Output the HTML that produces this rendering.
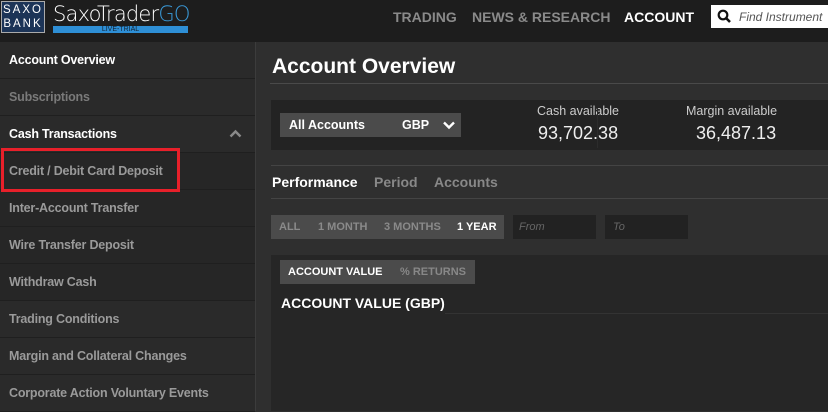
<!DOCTYPE html>
<html><head><style>
*{margin:0;padding:0;box-sizing:border-box}
body{width:828px;height:411px;overflow:hidden;background:#2f2f2f;font-family:"Liberation Sans",Arial,sans-serif;position:relative;color:#fff}
.a{position:absolute}
.hdr{left:0;top:0;width:828px;height:42px;background:#1d1d1d}
.nav{font-weight:bold;font-size:14px;top:9px;color:#8a8a8a}
.side{left:0;top:42px;width:256px;height:369px;background:#2a2a2a;border-right:1px solid #3c3c3c}
.row{position:absolute;left:0;width:255px;height:37px;border-bottom:1px solid #1f1f1f;font-size:12.5px;font-weight:bold;line-height:36px;padding-left:9px;color:#9a9a9a;letter-spacing:-0.2px}
.sub{background:#262626}
.b{color:#fff}
</style></head><body>
<div class="a hdr"></div>
<div class="a" style="left:1px;top:1px;width:44px;height:32px;border:1px solid #aaa;background:#1c3457;color:#fff;font-size:11.5px;letter-spacing:2px;line-height:14px;text-align:center;padding-top:1px">SAXO<br>BANK</div>
<div class="a" style="left:53px;top:2px;font-size:21px;color:#fff;font-family:'DejaVu Sans',sans-serif;font-weight:200;letter-spacing:-0.8px">SaxoTrader<span style="color:#3a9ad9">GO</span></div>
<div class="a" style="left:53px;top:26px;width:135px;height:7px;background:#2e8fd6;color:#123;font-size:7px;line-height:7px;text-align:center">LIVE-TRIAL</div>
<div class="a nav" style="left:393px">TRADING</div>
<div class="a nav" style="left:472px">NEWS &amp; RESEARCH</div>
<div class="a nav" style="left:624px;color:#fff">ACCOUNT</div>
<div class="a" style="left:711px;top:5px;width:117px;height:23px;background:#fff"></div>
<svg class="a" style="left:717px;top:9px" width="14" height="14" viewBox="0 0 14 14"><circle cx="6" cy="6" r="4.3" stroke="#111" stroke-width="2.2" fill="none"/><path d="M9 9l4 4" stroke="#111" stroke-width="2.6"/></svg>
<div class="a" style="left:739px;top:10px;font-size:12px;font-style:italic;color:#555">Find Instrument</div>

<div class="a side">
<div class="row b" style="top:0">Account Overview</div>
<div class="row" style="top:37px;color:#7a7a7a">Subscriptions</div>
<div class="row b" style="top:74px">Cash Transactions<svg style="position:absolute;left:229px;top:13px" width="13" height="9" viewBox="0 0 13 9"><path d="M1.5 7.5l5-5 5 5" stroke="#8a8a8a" stroke-width="2.4" fill="none"/></svg></div>
<div class="row sub" style="top:111px">Credit / Debit Card Deposit</div>
<div class="row sub" style="top:148px">Inter-Account Transfer</div>
<div class="row sub" style="top:185px">Wire Transfer Deposit</div>
<div class="row sub" style="top:222px">Withdraw Cash</div>
<div class="row" style="top:259px">Trading Conditions</div>
<div class="row" style="top:296px">Margin and Collateral Changes</div>
<div class="row" style="top:333px">Corporate Action Voluntary Events</div>
</div>
<div class="a" style="left:1px;top:148px;width:179px;height:44px;border:3px solid #e8202a"></div>

<div class="a" style="left:272px;top:55px;font-size:21px;font-weight:bold">Account Overview</div>
<div class="a" style="left:270px;top:83px;width:558px;height:1px;background:#4a4a4a"></div>
<div class="a" style="left:271px;top:100px;width:557px;height:50px;background:#232323"></div>
<div class="a" style="left:280px;top:113px;width:181px;height:24px;background:#4b4b4b;font-size:12.5px;font-weight:bold;line-height:24px;padding-left:9px">All Accounts<span style="position:absolute;left:122px">GBP</span>
<svg style="position:absolute;left:163px;top:8px" width="12" height="9" viewBox="0 0 12 9"><path d="M1 1.5l5 5 5-5" stroke="#fff" stroke-width="2.4" fill="none"/></svg></div>
<div class="a" style="left:537px;top:104px;font-size:12.5px;color:#ccc">Cash available</div>
<div class="a" style="left:538px;top:123px;font-size:18px;color:#eee">93,702.38</div>
<div class="a" style="left:597px;top:108px;width:1px;height:40px;background:#2c2c2c"></div>
<div class="a" style="left:686px;top:104px;font-size:12.5px;color:#ccc">Margin available</div>
<div class="a" style="left:696px;top:123px;font-size:18px;color:#eee">36,487.13</div>
<div class="a" style="left:271px;top:165px;width:557px;height:1px;background:#444"></div>
<div class="a" style="left:272px;top:174px;font-size:14px;font-weight:bold">Performance</div>
<div class="a" style="left:374px;top:174px;font-size:14px;font-weight:bold;color:#888">Period</div>
<div class="a" style="left:434px;top:174px;font-size:14px;font-weight:bold;color:#888">Accounts</div>
<div class="a" style="left:271px;top:198px;width:557px;height:1px;background:#444"></div>
<div class="a" style="left:271px;top:215px;width:233px;height:24px;background:#4b4b4b;font-size:11px;font-weight:bold;line-height:24px;color:#8a8a8a">
<span style="position:absolute;left:8px">ALL</span><span style="position:absolute;left:47px">1 MONTH</span><span style="position:absolute;left:113px">3 MONTHS</span><span style="position:absolute;left:186px;color:#fff">1 YEAR</span></div>
<div class="a" style="left:513px;top:215px;width:83px;height:24px;background:#222;font-size:11px;font-style:italic;color:#666;line-height:24px;padding-left:6px">From</div>
<div class="a" style="left:605px;top:215px;width:83px;height:24px;background:#222;font-size:11px;font-style:italic;color:#666;line-height:24px;padding-left:8px">To</div>
<div class="a" style="left:271px;top:255px;width:557px;height:156px;background:#262626"></div>
<div class="a" style="left:280px;top:260px;width:195px;height:24px;background:#4b4b4b;font-size:11px;font-weight:bold;line-height:24px"><span style="position:absolute;left:8px">ACCOUNT VALUE</span><span style="position:absolute;left:120px;color:#888">% RETURNS</span></div>
<div class="a" style="left:281px;top:295px;font-size:14px;font-weight:bold">ACCOUNT VALUE (GBP)</div>
<div class="a" style="left:445px;top:313px;width:383px;height:1px;background:#333"></div>
</body></html>
